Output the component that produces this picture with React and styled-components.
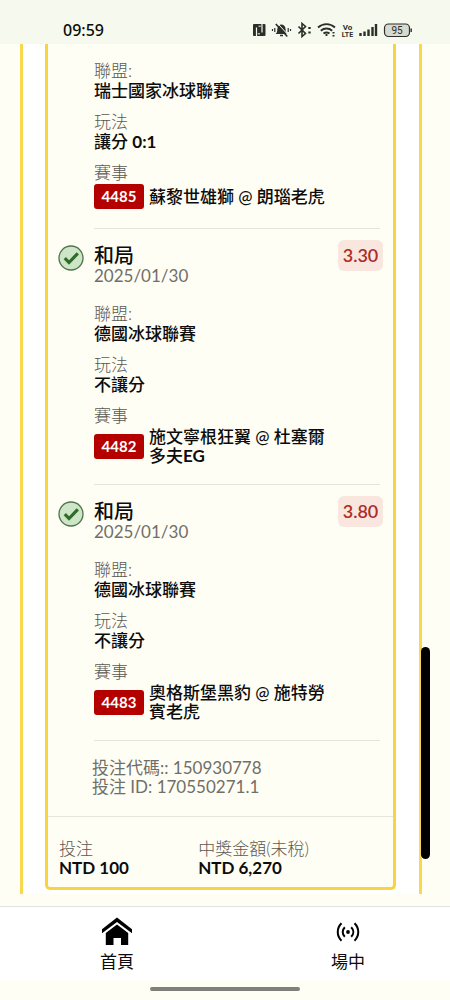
import React from "react";
import styled, { createGlobalStyle } from "styled-components";

const GlobalStyle = createGlobalStyle`
  *, *::before, *::after { box-sizing: border-box; }
  body {
    margin: 0;
    background: #fffef5;
    color: #0c0c0c;
    font-family: Lato, "Noto Sans CJK TC", sans-serif;
    font-size: 17px;
    line-height: 19px;
  }
  dl, dd, h2, p { margin: 0; }
`;

const Screen = styled.div`
  min-height: 100vh;
  display: flex;
  flex-direction: column;
`;

const StatusBar = styled.header`
  height: 44px;
  padding: 16px 38px 0 63px;
  display: flex;
  align-items: flex-start;
  justify-content: space-between;
  background: #f6faee;
`;

const Clock = styled.time`
  font: 500 16px/28px "Noto Sans", sans-serif;
`;

const StatusIcons = styled.svg`
  width: 160px;
  height: 28px;
`;

const Main = styled.main`
  position: relative;
  flex: 1;
  padding: 0 28px 12px 20px;
`;

const Panel = styled.div`
  padding: 0 23px 4px 22px;
  border: solid #f8d84c;
  border-width: 0 3px;
  background: #fff;
`;

const Slip = styled.section`
  border: 3px solid #f8d440;
  border-top: 0;
  border-radius: 0 0 5px 5px;
  background: #fffef5;
`;

const Leg = styled.article`
  margin: 0 13px 0 46px;
  padding: ${(p) => (p.$continued ? "17px" : "14px")} 0 19px;
  border-bottom: 1px solid #e6e4df;
`;

const LegHeader = styled.header`
  display: flex;
  margin: 0 -3px 19px -36px;
  height: 42px;
`;

const LegHeading = styled.div`
  flex: 1;
`;

const WonIcon = styled.svg`
  width: 26px;
  height: 26px;
  margin: 2px 10px 0 0;
`;

const Pick = styled.h2`
  font-size: 20px;
  line-height: 24px;
  font-weight: 500;
`;

const LegDate = styled.time`
  display: block;
  color: #706e69;
  font-size: 17px;
  line-height: 18px;
`;

const Odds = styled.data`
  width: 45px;
  height: 31px;
  margin-top: -3px;
  border-radius: 6px;
  background: #f8e6df;
  color: #ad2c28;
  font-size: 18px;
  font-weight: 600;
  line-height: 31px;
  text-align: center;
`;

const Details = styled.dl`
  display: grid;
  gap: 11px;
`;

const Label = styled.dt`
  color: #5a5853;
  font-weight: 300;
  line-height: ${(p) => (p.$compact ? "19px" : "20px")};
`;

const Value = styled.dd`
  font-weight: 500;
  line-height: 20px;
`;

const Match = styled.dd`
  display: flex;
  align-items: center;
  gap: 5px;
  margin-top: 1px;
  padding-right: 50px;
  font-weight: 500;
`;

const MatchCode = styled.span`
  flex: none;
  width: 50px;
  border-radius: 3px;
  background: #b50000;
  color: #fff;
  font-size: 15px;
  font-weight: 700;
  line-height: 25px;
  text-align: center;
`;

const References = styled.div`
  padding: 17px 13px 20px 44px;
  color: #706e69;
`;

const Totals = styled.dl`
  display: grid;
  grid-template-columns: 5fr 7fr;
  padding: 22px 0 10px 11px;
  border-top: 1px solid #e6e4df;
`;

const Amount = styled.dd`
  font-weight: 700;
`;

const ScrollThumb = styled.div`
  position: absolute;
  top: 603px;
  right: 20px;
  width: 9px;
  height: 212px;
  border-radius: 5px;
  background: #000;
`;

const TabBar = styled.nav`
  display: flex;
  justify-content: space-between;
  padding: 0 62px 8px 77px;
  border-top: 1px solid #e2e2e2;
  background: #fff;
`;

const Tab = styled.a`
  width: 80px;
  padding-top: 9px;
  display: flex;
  flex-direction: column;
  align-items: center;
  gap: 4px;
  color: #0c0c0c;
  font-weight: 400;
  line-height: 20px;
  text-decoration: none;
`;

const TabIcon = styled.svg`
  width: 32px;
  height: 32px;
`;

const GestureArea = styled.footer`
  height: 20px;
  padding-top: 7px;
`;

const GestureBar = styled.div`
  width: 33.4%;
  height: 4px;
  margin: 0 auto;
  border-radius: 2px;
  background: #80807a;
`;

function DeviceStatus() {
  return (
    <StatusIcons viewBox="252 16 160 28" role="img" aria-label="NFC, 靜音, 藍牙, Wi-Fi, VoLTE, 訊號, 電量 95" fill="none" stroke="#2c2f29">
      <rect x="253" y="24" width="12.500" height="12" rx="1" fill="#2c2f29" stroke="none" />
      <path d="M256.500 36.500v-9M262 23.500v9" stroke="#f6faee" strokeWidth="1.200" />
      <path d="M258.500 26.200h2.300M257.700 33.800h2.300" stroke="#f6faee" strokeWidth="1" />
      <g>
        <path d="M275.500 34c1.900-1 1.600-3.500 1.900-5.500.4-2.500 2-3.800 4-4 2.300.2 3.800 1.500 4.100 4 .3 2 0 4.500 1.900 5.500z" fill="#2c2f29" stroke="none" />
        <path d="M280 35.500h3" strokeWidth="1.500" />
        <path d="M277.500 23.300l11 12" stroke="#f6faee" strokeWidth="1" />
        <path d="M275.800 24l11.500 12.500" strokeWidth="1.600" />
        <path d="M274.800 28v4M272.500 29v2M288.200 28v4M290.500 29v2" strokeWidth="1.200" />
      </g>
      <path d="M298.500 26.500l7 7-3.500 3v-13l3.500 3-7 7" strokeWidth="1.600" />
      <path d="M309.500 27v2M309.500 31.500v2" strokeWidth="2.400" />
      <g strokeWidth="1.900">
        <path d="M318 27.500c5-4.500 12-4.500 17 0M320.800 30.700c3.300-3 8-3 11.400 0M323.500 33.600c2-1.600 4-1.600 6 0" />
        <path d="M326.500 34v2" />
        <path d="M333.500 32v1.600M333.500 35v1.600" strokeWidth="2" />
      </g>
      <g fill="#2c2f29" stroke="none" fontFamily="Roboto, sans-serif" fontWeight="700" textAnchor="middle">
        <text x="347.500" y="29.500" fontSize="8">Vo</text>
        <text x="347.500" y="36.500" fontSize="7">LTE</text>
      </g>
      <path d="M360.500 33v3M364.500 31.500v4.500M368.500 29.500v6.500M372.500 27v9M376 24v12" strokeWidth="2.400" />
      <rect x="384.500" y="24" width="25" height="12.500" rx="4" fill="#d7dad1" strokeWidth="1.200" />
      <path d="M411.200 28.500v3.500" strokeWidth="1.400" />
      <text x="397" y="34" textAnchor="middle" fontSize="10" fontFamily="Roboto, sans-serif" fill="#2c2f29" stroke="none">95</text>
    </StatusIcons>
  );
}

function LegCard({ leg }) {
  return (
    <Leg $continued={!leg.pick}>
      {leg.pick && (
        <LegHeader>
          <WonIcon viewBox="0 0 26 26" role="img" aria-label="贏">
            <circle cx="13" cy="13" r="12" fill="#cfe5c8" stroke="#50744c" strokeWidth="1.300" />
            <path d="M6.800 13.200l4.200 4.300 8.800-9.200" fill="none" stroke="#2d6d27" strokeWidth="3.200" />
          </WonIcon>
          <LegHeading>
            <Pick>{leg.pick}</Pick>
            <LegDate dateTime="2025-01-30">2025/01/30</LegDate>
          </LegHeading>
          <Odds value={leg.odds}>{leg.odds}</Odds>
        </LegHeader>
      )}
      <Details>
        <div>
          <Label>聯盟:</Label>
          <Value>{leg.league}</Value>
        </div>
        <div>
          <Label>玩法</Label>
          <Value>{leg.market}</Value>
        </div>
        <div>
          <Label>賽事</Label>
          <Match>
            <MatchCode>{leg.code}</MatchCode>
            <span>{leg.match}</span>
          </Match>
        </div>
      </Details>
    </Leg>
  );
}

const legs = [
  { league: "瑞士國家冰球聯賽", market: <>讓分 <b>0:1</b></>, code: "4485", match: "蘇黎世雄獅 @ 朗瑙老虎" },
  { pick: "和局", odds: "3.30", league: "德國冰球聯賽", market: "不讓分", code: "4482", match: <>施文寧根狂翼 @ 杜塞爾多夫<b>EG</b></> },
  { pick: "和局", odds: "3.80", league: "德國冰球聯賽", market: "不讓分", code: "4483", match: "奧格斯堡黑豹 @ 施特勞賓老虎" },
];

export default function App() {
  return (
    <Screen>
      <GlobalStyle />
      <StatusBar>
        <Clock>09:59</Clock>
        <DeviceStatus />
      </StatusBar>
      <Main>
        <Panel>
          <Slip>
            {legs.map((leg) => (
              <LegCard key={leg.code} leg={leg} />
            ))}
            <References>
              <p>投注代碼:: 150930778</p>
              <p>投注 ID: 170550271.1</p>
            </References>
            <Totals>
              <div>
                <Label $compact>投注</Label>
                <Amount>NTD 100</Amount>
              </div>
              <div>
                <Label $compact>中獎金額(未稅)</Label>
                <Amount>NTD 6,270</Amount>
              </div>
            </Totals>
          </Slip>
        </Panel>
        <ScrollThumb />
      </Main>
      <TabBar>
        <Tab href="#home">
          <TabIcon viewBox="0 0 32 32" aria-hidden="true">
            <path d="M1 13.200L16 1.500l15 11.700v4L16 6 1 17.200z" fill="#000" />
            <path d="M4.800 17L16 8.500 27.200 17v12H20v-7h-7.500v7H4.800z" fill="#000" />
          </TabIcon>
          首頁
        </Tab>
        <Tab href="#live">
          <TabIcon viewBox="0 0 32 32" aria-hidden="true" fill="none" stroke="#000" strokeWidth="2">
            <circle cx="16" cy="16" r="1.900" fill="#000" stroke="none" />
            <path d="M12.800 11.200c-2.800 2.800-2.800 6.800 0 9.600M19.200 11.200c2.800 2.800 2.800 6.800 0 9.600M9.500 7.300c-5 5-5 12.400 0 17.400M22.500 7.300c5 5 5 12.400 0 17.400" />
          </TabIcon>
          場中
        </Tab>
      </TabBar>
      <GestureArea>
        <GestureBar />
      </GestureArea>
    </Screen>
  );
}
